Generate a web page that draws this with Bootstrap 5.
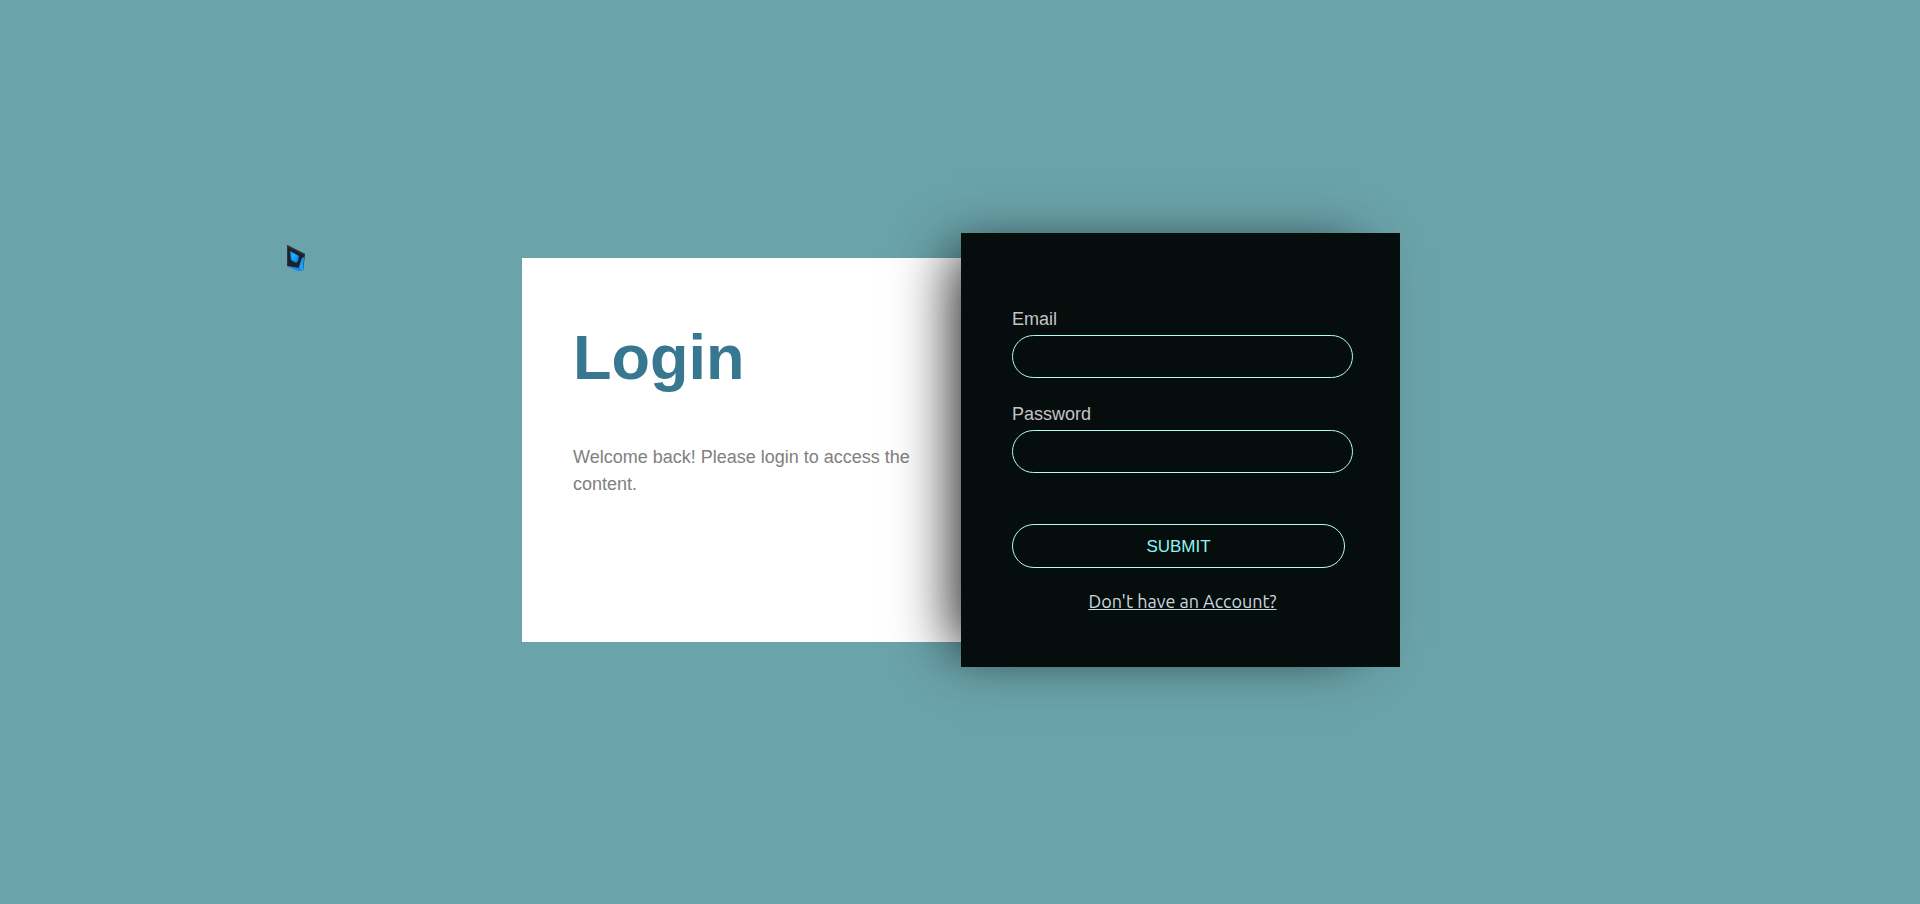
<!DOCTYPE html>
<html lang="en">
<head>
<meta charset="utf-8">
<meta name="viewport" content="width=device-width, initial-scale=1">
<title>Login</title>
<link href="https://cdn.jsdelivr.net/npm/bootstrap@5.3.0/dist/css/bootstrap.min.css" rel="stylesheet">
<style>
body { background: #6ba3ab; font-family: "Liberation Sans", Arial, sans-serif; font-size: 18px; }
main { padding-bottom: 4px; }
.login-box { max-width: 878px; margin-left: 2px; }
.panel-intro { background: #fff; color: #808080; padding: 51px; min-height: 384px; line-height: 27px; }
.panel-intro h1 { color: #387790; font-size: 63px; line-height: 96px; margin-bottom: 39px; }
.panel-form { background: #060d0d; color: #c4c4c4; padding: 72px 47px 51px 51px; min-height: 434px; line-height: 27px;
  box-shadow: -26px 0 54px -18px rgba(0, 0, 0, .86); }
.panel-form label { line-height: 28px; margin-bottom: 2px; }
.field-email { margin-bottom: 22px; }
.field-password { margin-bottom: 51px; }
.pill { display: block; width: 100%; height: 43px; padding: 0 20px; border: 1px solid #b4fcf0; border-radius: 22px; background: transparent; color: #c4c4c4; }
.btn-submit { width: calc(100% - 8px); height: 44px; margin-bottom: 20px; color: #8cf8f4; font-size: 17px; }
.link-signup { color: #c8d8dc; font-family: Ubuntu, Lato, sans-serif; }
.logo { left: 286px; top: 245px; }
</style>
</head>
<body>
<svg class="logo position-absolute" width="20" height="28" viewBox="0 0 20 28" aria-hidden="true">
  <defs>
    <radialGradient id="glow" cx=".4" cy=".4" r=".6">
      <stop offset="0" stop-color="#1fb8ff"/>
      <stop offset="1" stop-color="#0884f4"/>
    </radialGradient>
  </defs>
  <path d="M1 0 19 9 17 26 14 26 1 21Z" fill="#1c2226"/>
  <path d="M1 0 19 9 18 10 2 2V21L1 21Z" fill="#363432"/>
  <path d="M4 6 13 11 12 16 10 18 5 15Z" fill="url(#glow)"/>
  <path d="M2 21 14 23 15 26 12 26 3 22Z" fill="#1688f8"/>
  <path d="M16 13 18 12 17 26 15 26 13 22Z" fill="#1c9cff"/>
</svg>
<main class="d-flex min-vh-100 align-items-center justify-content-center">
  <div class="login-box row g-0 w-100 align-items-center">
    <section class="col-6 panel-intro">
      <h1 class="fw-bold">Login</h1>
      <p class="mb-0">Welcome back! Please login to access the content.</p>
    </section>
    <form class="col-6 panel-form">
      <div class="field-email">
        <label class="d-block" for="email">Email</label>
        <input class="pill" type="email" id="email">
      </div>
      <div class="field-password">
        <label class="d-block" for="password">Password</label>
        <input class="pill" type="password" id="password">
      </div>
      <button class="pill btn-submit" type="submit">SUBMIT</button>
      <div class="text-center"><a class="link-signup" href="#">Don't have an Account?</a></div>
    </form>
  </div>
</main>
<script src="https://cdn.jsdelivr.net/npm/bootstrap@5.3.0/dist/js/bootstrap.bundle.min.js"></script>
</body>
</html>
